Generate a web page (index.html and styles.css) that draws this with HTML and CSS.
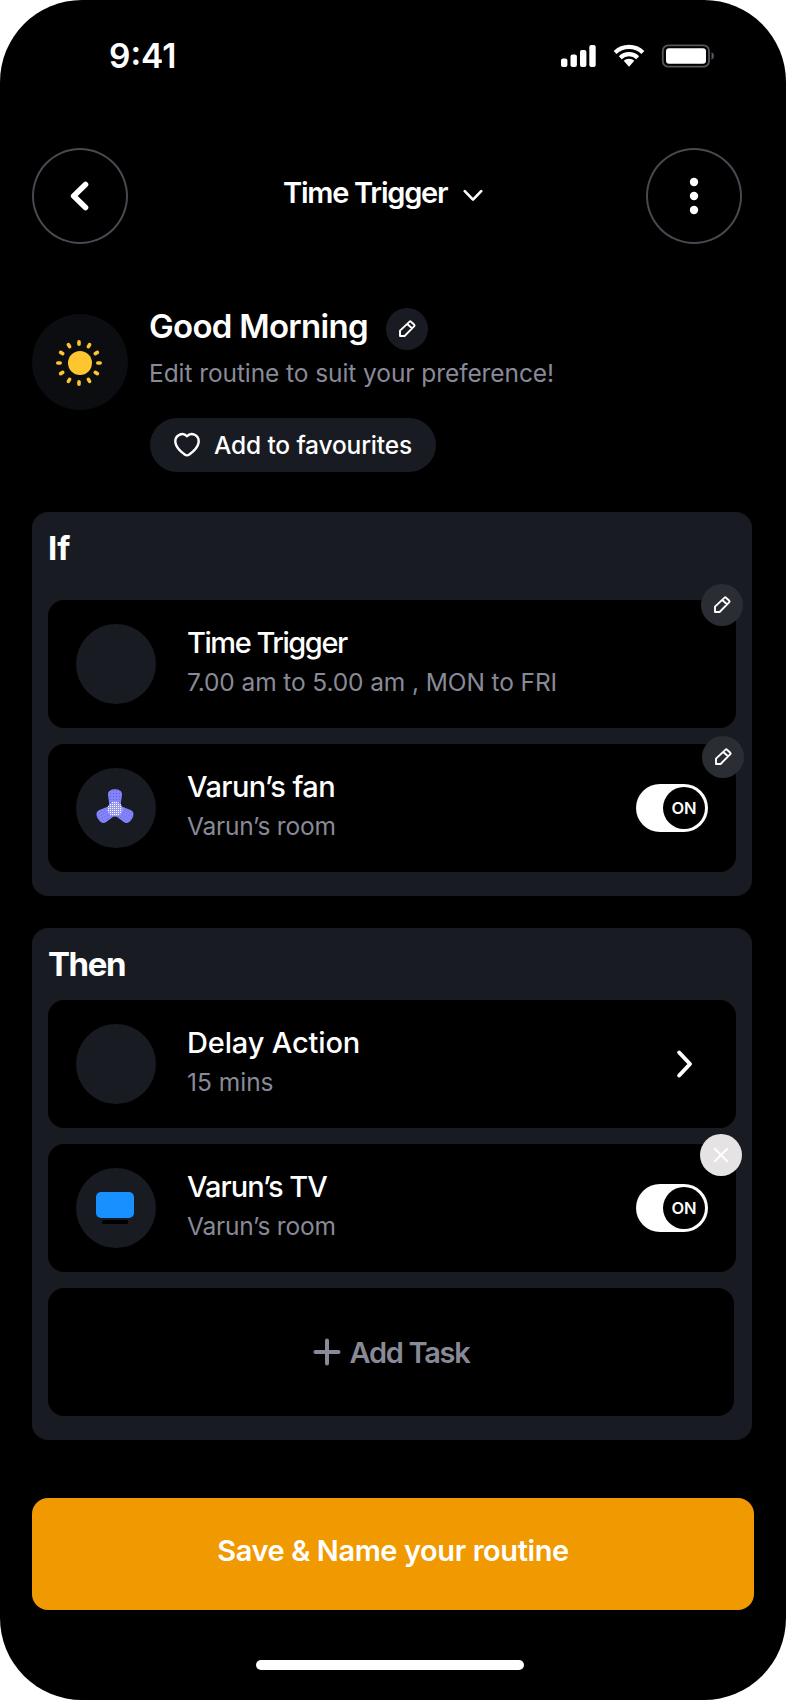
FILE: index.html
```html
<!DOCTYPE html>
<html lang="en">
<head>
<meta charset="utf-8">
<title>Time Trigger</title>
<link rel="stylesheet" href="styles.css">
</head>
<body>
<svg class="defs" aria-hidden="true">
  <defs>
    <symbol id="pencil" viewBox="0 0 42 42">
      <path d="M14 28V22.6L23.6 13.6Q24.3 13 25 13.7L28.3 16.8Q29 17.500 28.300 18.200L18.600 28Z M21.300 16L26.200 20.500" fill="none" stroke="#fff" stroke-width="1.9" stroke-linejoin="round"/>
    </symbol>
  </defs>
</svg>
<main class="phone">
  <div class="status">
    <span class="clock">9:41</span>
    <svg class="status-icons" width="156" height="26" viewBox="0 0 156 26">
      <g fill="#fff">
        <rect x="1" y="15.500" width="6.400" height="8.500" rx="2"/>
        <rect x="10.500" y="11.500" width="6.400" height="12.500" rx="2"/>
        <rect x="20" y="7" width="6.400" height="17" rx="2"/>
        <rect x="29.300" y="2" width="6.400" height="22" rx="2"/>
        <path d="M69 15.700C71.200 15.700 73.100 16.500 74.300 17.800L69 23.800L63.700 17.800C64.900 16.500 66.800 15.700 69 15.700Z"/>
      </g>
      <g fill="none" stroke="#fff" stroke-width="4.200">
        <path d="M55.100 9.600A19.800 19.800 0 0 1 82.900 9.600"/>
        <path d="M60.300 14.700A12.600 12.600 0 0 1 77.700 14.700"/>
      </g>
      <rect x="102.800" y="2.300" width="46.200" height="21.400" rx="5.500" fill="none" stroke="#55565e" stroke-width="1.800"/>
      <rect x="106" y="5.300" width="40" height="15.400" rx="3" fill="#fff"/>
      <path d="M151.500 9V17Q154 15.800 154 13Q154 10.200 151.500 9Z" fill="#55565e"/>
    </svg>
  </div>

  <header class="topbar">
    <button class="round" aria-label="Back">
      <svg width="96" height="96" viewBox="0 0 96 96"><path d="M53.500 36.500L41.700 48L53.500 59.500" fill="none" stroke="#fff" stroke-width="5.600" stroke-linecap="round" stroke-linejoin="round"/></svg>
    </button>
    <div class="title">
      <span class="title-text">Time Trigger</span>
      <svg class="title-arrow" width="20" height="14" viewBox="0 0 20 14"><path d="M1.800 2.200L10 10.600L18.200 2.200" fill="none" stroke="#fff" stroke-width="2.600" stroke-linecap="round" stroke-linejoin="round"/></svg>
    </div>
    <button class="round" aria-label="More">
      <svg width="96" height="96" viewBox="0 0 96 96" fill="#fff"><circle cx="48" cy="34" r="4.200"/><circle cx="48" cy="48" r="4.200"/><circle cx="48" cy="62" r="4.200"/></svg>
    </button>
  </header>

  <section class="hero">
    <div class="sun">
      <svg width="96" height="96" viewBox="0 0 96 96">
        <circle cx="48" cy="49" r="12" fill="#fdc62e"/>
        <g stroke="#fdc62e" stroke-width="3.600" stroke-linecap="round">
          <path d="M47 27.800V30.200M47 67.800V70.200M25.800 49H28.200M65.800 49H68.200"/>
          <path d="M36.400 30.640L37.600 32.720M56.400 65.280L57.600 67.360M28.640 38.400L30.720 39.600M63.280 58.400L65.360 59.600"/>
          <path d="M57.600 30.640L56.400 32.720M37.600 65.280L36.400 67.360M65.360 38.400L63.280 39.600M30.720 58.400L28.640 59.600"/>
        </g>
      </svg>
    </div>
    <div class="hero-body">
      <div class="hero-head">
        <h1>Good Morning</h1>
        <button class="badge dark" aria-label="Edit name"><svg width="42" height="42"><use href="#pencil"/></svg></button>
      </div>
      <p class="subtitle">Edit routine to suit your preference!</p>
      <button class="favourite">
        <svg width="28" height="26" viewBox="0 0 28 26"><path d="M14 4.300C12 2 8.800 1.600 6.300 2.800C3.300 4.300 1.900 7.600 2.500 11C3.300 16 8.500 20.200 11.700 22.500C13.300 23.700 14.700 23.700 16.300 22.500C19.500 20.200 24.700 16 25.500 11C26.100 7.600 24.700 4.300 21.700 2.800C19.200 1.600 16 2 14 4.300Z" fill="none" stroke="#fff" stroke-width="2.400" stroke-linejoin="round"/></svg>
        <span>Add to favourites</span>
      </button>
    </div>
  </section>

  <section class="group group-if">
    <h2 class="if-label">If</h2>
    <article class="row">
      <div class="thumb"></div>
      <div class="info"><h3 class="tt">Time Trigger</h3><p class="hours">7.00 am to 5.00 am , MON to FRI</p></div>
      <button class="badge corner trigger" aria-label="Edit trigger"><svg width="42" height="42"><use href="#pencil"/></svg></button>
    </article>
    <article class="row">
      <div class="thumb">
        <svg width="80" height="80" viewBox="0 0 80 80">
          <defs>
            <pattern id="dots" width="3" height="3" patternUnits="userSpaceOnUse"><rect width="3" height="3" fill="#8483fb"/><rect x="1" y="1" width="1" height="1" fill="#6261d6"/></pattern>
            <pattern id="hub" width="2" height="2" patternUnits="userSpaceOnUse"><rect width="2" height="2" fill="#9a99ee"/><rect width="1" height="1" fill="#fff"/></pattern>
          </defs>
          <g fill="url(#dots)">
            <path id="blade" d="M33.400 40C33.400 34 32.200 30 32 26.500C31.800 23 35 21.300 39 21.300S46.200 23 46 26.500C45.800 30 44.600 34 44.600 40Z"/>
            <use href="#blade" transform="rotate(120 39 41)"/>
            <use href="#blade" transform="rotate(240 39 41)"/>
          </g>
          <circle cx="39" cy="41" r="7.500" fill="url(#hub)"/>
        </svg>
      </div>
      <div class="info"><h3 class="fan">Varun’s fan</h3><p class="room">Varun’s room</p></div>
      <div class="toggle"><span class="knob">ON</span></div>
      <button class="badge corner device" aria-label="Edit fan"><svg width="42" height="42"><use href="#pencil"/></svg></button>
    </article>
  </section>

  <section class="group group-then">
    <h2 class="then-label">Then</h2>
    <article class="row">
      <div class="thumb"></div>
      <div class="info"><h3 class="delay">Delay Action</h3><p>15 mins</p></div>
      <svg class="chevron" width="18" height="30" viewBox="0 0 18 30"><path d="M3.200 3.500L14 15L3.200 26.500" fill="none" stroke="#fff" stroke-width="4" stroke-linecap="round" stroke-linejoin="round"/></svg>
    </article>
    <article class="row">
      <div class="thumb">
        <svg width="80" height="80" viewBox="0 0 80 80"><rect x="20" y="24" width="38" height="26" rx="5" fill="#1890ff"/><rect x="26" y="52" width="26" height="4" rx="1.500" fill="#000"/></svg>
      </div>
      <div class="info"><h3 class="tv">Varun’s TV</h3><p class="room">Varun’s room</p></div>
      <div class="toggle"><span class="knob">ON</span></div>
      <button class="badge corner remove" aria-label="Remove"><svg width="42" height="42" viewBox="0 0 42 42"><path d="M14.300 14.300L27.700 27.700M27.700 14.300L14.300 27.700" stroke="#fff" stroke-width="2"/></svg></button>
    </article>
    <button class="add">
      <svg width="28" height="28" viewBox="0 0 28 28"><path d="M14 2.500V25.500M2.500 14H25.500" stroke="#888a97" stroke-width="4" stroke-linecap="round"/></svg>
      <span>Add Task</span>
    </button>
  </section>

  <button class="save">Save &amp; Name your routine</button>
  <div class="home"></div>
</main>
</body>
</html>
```

FILE: styles.css
```css
* { box-sizing: border-box; }

body {
  margin: 0;
  background: #fff;
  font-family: Inter, "Liberation Sans", sans-serif;
  color: #fff;
}

h1, h2, h3, p { margin: 0; }

button {
  border: 0;
  padding: 0;
  background: none;
  color: inherit;
  font: inherit;
}

svg { display: block; flex: none; }

.defs { position: absolute; width: 0; height: 0; }

.phone {
  display: flex;
  flex-direction: column;
  width: 786px;
  height: 1700px;
  padding: 0 32px;
  border-radius: 82px;
  background: #000;
  overflow: hidden;
}

.status {
  display: flex;
  flex: none;
  justify-content: space-between;
  align-items: center;
  height: 112px;
  padding: 0 38px 0 77px;
}

.clock {
  font-size: 33.5px;
  font-weight: 600;
  letter-spacing: 0;
}

.topbar {
  display: flex;
  flex: none;
  justify-content: space-between;
  width: 710px;
  height: 96px;
  margin-top: 36px;
}

.round {
  width: 96px;
  height: 96px;
  border-radius: 50%;
  box-shadow: inset 0 0 0 2px #484951;
}

.title {
  display: flex;
  align-items: flex-start;
  margin-right: 8px;
}

.title-text {
  width: 180px;
  font-size: 29px;
  font-weight: 600;
  line-height: 89px;
  letter-spacing: -1.24px;
  white-space: nowrap;
}

.title-arrow { margin-top: 41px; }

.hero {
  display: flex;
  flex: none;
  gap: 22px;
  height: 164px;
  margin-top: 64px;
}

.sun {
  flex: none;
  width: 96px;
  height: 96px;
  margin-top: 6px;
  border-radius: 50%;
  background: #0c0d10;
}

.hero-head {
  display: flex;
  gap: 19px;
  height: 42px;
}

h1 {
  width: 218px;
  margin-left: -1px;
  font-size: 33px;
  font-weight: 600;
  line-height: 36px;
  letter-spacing: -0.71px;
  white-space: nowrap;
}

.badge {
  flex: none;
  width: 42px;
  height: 42px;
  border-radius: 50%;
  background: #2b2d34;
}

.badge.dark { background: #191b22; }

.subtitle {
  margin-left: -1px;
  font-size: 24.5px;
  line-height: 47px;
  letter-spacing: -0.08px;
  color: #888a97;
}

.favourite {
  display: flex;
  align-items: center;
  gap: 13px;
  width: 286px;
  height: 54px;
  margin-top: 21px;
  padding-left: 23px;
  border-radius: 27px;
  background: #191b22;
  font-size: 24.5px;
  font-weight: 500;
  letter-spacing: -0.15px;
  white-space: nowrap;
}

.group {
  display: flex;
  flex: none;
  flex-direction: column;
  gap: 16px;
  width: 720px;
  padding: 0 16px 24px;
  border-radius: 16px;
  background: #191b22;
}

.group-if { height: 384px; margin-top: 40px; }
.group-then { height: 512px; margin-top: 32px; }

h2 { font-size: 33px; font-weight: 700; }
.if-label { height: 72px; line-height: 72px; }
.then-label { height: 56px; line-height: 72px; letter-spacing: -1.41px; }

.row {
  position: relative;
  display: flex;
  flex: none;
  align-items: center;
  height: 128px;
  padding: 0 28px;
  border-radius: 16px;
  background: #000;
}

.thumb {
  flex: none;
  width: 80px;
  height: 80px;
  border-radius: 50%;
  background: #191b22;
}

.info {
  flex: 1;
  height: 128px;
  padding-top: 23px;
  padding-left: 31px;
  white-space: nowrap;
}

h3 {
  font-size: 29px;
  font-weight: 500;
  line-height: 39px;
}

.info p {
  font-size: 24.5px;
  line-height: 40px;
  color: #888a97;
}

.tt { letter-spacing: -1.45px; }
.fan { letter-spacing: -0.6px; }
.delay { letter-spacing: -0.15px; }
.tv { letter-spacing: -0.98px; }
.info .hours { letter-spacing: -0.11px; }
.info .room { letter-spacing: -0.2px; }

.corner { position: absolute; }
.trigger { top: -16px; right: -7px; }
.device { top: -8px; right: -8px; }
.remove { top: -10px; right: -6px; background: #e5e3e4; }

.toggle {
  display: flex;
  justify-content: flex-end;
  align-items: center;
  width: 72px;
  height: 48px;
  padding-right: 3px;
  border-radius: 24px;
  background: #fff;
}

.knob {
  width: 42px;
  height: 42px;
  border-radius: 50%;
  background: #000;
  font-size: 16.5px;
  font-weight: 600;
  line-height: 42px;
  text-align: center;
}

.chevron { margin-right: 14px; }

.add {
  display: flex;
  flex: none;
  align-items: center;
  justify-content: center;
  gap: 9px;
  width: 686px;
  height: 128px;
  border-radius: 16px;
  background: #000;
  color: #888a97;
  font-size: 29px;
  font-weight: 600;
  letter-spacing: -1.3px;
}

.save {
  flex: none;
  width: 722px;
  height: 112px;
  margin-top: 58px;
  padding-bottom: 7px;
  border-radius: 16px;
  background: #f19900;
  font-size: 29px;
  font-weight: 600;
  letter-spacing: -0.42px;
}

.home {
  flex: none;
  width: 268px;
  height: 10px;
  margin: 50px 0 0 224px;
  border-radius: 5px;
  background: #fff;
}
```
